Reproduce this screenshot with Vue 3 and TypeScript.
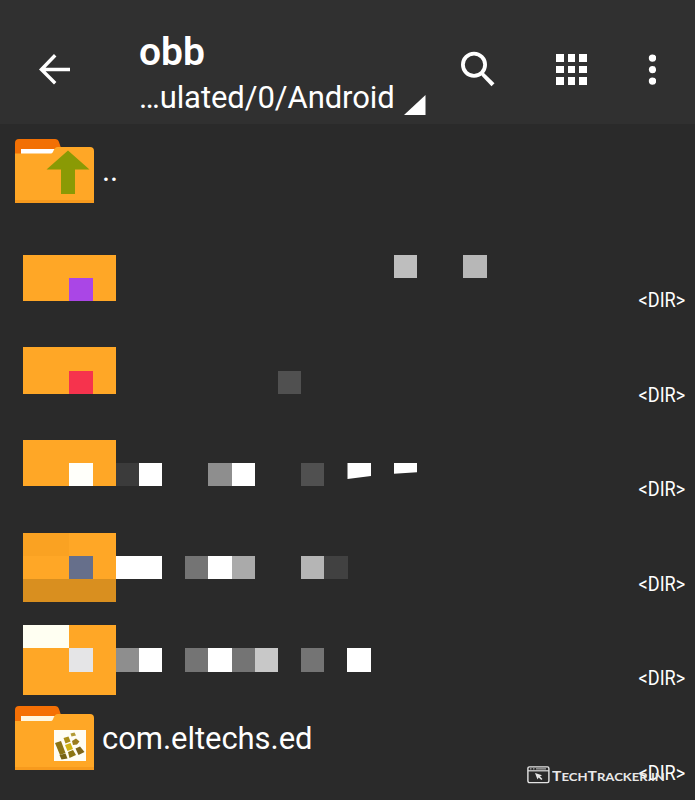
<script setup lang="ts">
interface Tile {
  x: number
  y: number
  w: number
  h: number
  fill: string
}
interface Entry {
  top: number
  height: number
  tiles: Tile[]
  slants?: string[]
}

const t = (x: number, y: number, w: number, h: number, fill: string): Tile => ({ x, y, w, h, fill })

const hiddenEntries: Entry[] = [
  {
    top: 218,
    height: 95,
    tiles: [
      t(23, 255, 93, 46, '#ffa726'),
      t(69, 278, 24, 23, '#aa46e6'),
      t(394, 255, 23, 23, '#bebebe'),
      t(463, 255, 24, 23, '#b7b7b7'),
    ],
  },
  {
    top: 313,
    height: 94,
    tiles: [
      t(23, 347, 93, 47, '#ffa726'),
      t(69, 371, 24, 23, '#f6334d'),
      t(278, 371, 23, 23, '#505050'),
    ],
  },
  {
    top: 407,
    height: 95,
    tiles: [
      t(23, 440, 93, 46, '#ffa726'),
      t(69, 463, 24, 23, '#fffffa'),
      t(116, 463, 23, 23, '#3b3b3b'),
      t(139, 463, 23, 23, '#ffffff'),
      t(208, 463, 24, 23, '#8e8e8e'),
      t(232, 463, 23, 23, '#ffffff'),
      t(301, 463, 23, 23, '#505050'),
    ],
    slants: ['347.5,463 371,463 371,476 347.5,479', '394,463 417,463 417,472.3 394,473.7'],
  },
  {
    top: 502,
    height: 94,
    tiles: [
      t(23, 533, 46, 23, '#faa222'),
      t(69, 533, 47, 23, '#ffa726'),
      t(23, 556, 93, 23, '#ffa726'),
      t(23, 579, 93, 23, '#d98f1f'),
      t(69, 556, 24, 23, '#666f8b'),
      t(116, 556, 46, 23, '#ffffff'),
      t(185, 556, 23, 23, '#747474'),
      t(208, 556, 24, 23, '#ffffff'),
      t(232, 556, 23, 23, '#aaaaaa'),
      t(301, 556, 23, 23, '#b5b5b5'),
      t(324, 556, 24, 23, '#414141'),
    ],
  },
  {
    top: 596,
    height: 95,
    tiles: [
      t(23, 625, 93, 70, '#ffa726'),
      t(23, 625, 46, 23, '#fffff2'),
      t(69, 648, 24, 24, '#e5e5e7'),
      t(116, 648, 23, 24, '#8e8e8e'),
      t(139, 648, 23, 24, '#ffffff'),
      t(185, 648, 23, 24, '#747474'),
      t(208, 648, 24, 24, '#ffffff'),
      t(232, 648, 23, 24, '#747474'),
      t(255, 648, 23, 24, '#c8c8c8'),
      t(301, 648, 23, 24, '#747474'),
      t(347, 648, 24, 24, '#ffffff'),
    ],
  },
]
</script>

<template>
  <main class="screen">
    <header class="bar">
      <svg class="back" width="32" height="32" viewBox="0 0 32 32">
        <path d="M31 16.500H3M16.200 2.200 2.400 16.500l13.800 13.700" fill="none" stroke="#fff" stroke-width="3.400" />
      </svg>
      <div class="titles">
        <div class="title">obb</div>
        <div class="path-line">
          <span class="path">…ulated/0/Android</span>
          <svg class="corner" width="22" height="20" viewBox="0 0 22 20"><path d="M21.5 0v20H0z" fill="#fff" /></svg>
        </div>
      </div>
      <svg class="search" width="36" height="36" viewBox="0 0 36 36">
        <circle cx="14" cy="13.7" r="11.1" fill="none" stroke="#fff" stroke-width="3.8" />
        <path d="M21 21.5 24 22l10.5 10.2-3 3L21.8 25z" fill="#fff" />
      </svg>
      <svg class="grid" width="32" height="32" viewBox="0 0 32 32" shape-rendering="crispEdges">
        <path d="M0 0h8v8H0zM12 0h7v8h-7zM23 0h8v8h-8zM0 12h8v7H0zM12 12h7v7h-7zM23 12h8v7h-8zM0 23h8v8H0zM12 23h7v8h-7zM23 23h8v8h-8z" fill="#fff" />
      </svg>
      <svg class="more" width="8" height="32" viewBox="0 0 8 32">
        <circle cx="4.5" cy="4.1" r="3.7" fill="#fff" />
        <circle cx="4.5" cy="15.6" r="3.6" fill="#fff" />
        <circle cx="4.5" cy="27.1" r="3.7" fill="#fff" />
      </svg>
    </header>

    <section class="list">
      <div class="row first">
        <svg class="folder" width="79" height="64" viewBox="0 0 79 64">
          <path d="M0 20V4q0-4 4-4h36q3 0 4 3l3 9v8z" fill="#f27004" />
          <path d="M6 10h36v8H6z" fill="#fff" />
          <path d="M0 14.5h36c3 0 2-6.5 7-6.5h32q4 0 4 4v52H0z" fill="#ffa726" />
          <path d="M0 61h79v3H0z" fill="#f79a1d" />
          <path d="M53 11.5 31.5 30.5H46V55h14V30.5h14.5z" fill="#8a9a05" />
        </svg>
        <span class="name up">..</span>
      </div>

      <div v-for="e in hiddenEntries" :key="e.top" class="row">
        <svg class="mosaic" width="500" :height="e.height" :viewBox="`0 ${e.top} 500 ${e.height}`">
          <rect v-for="(r, i) in e.tiles" :key="i" :x="r.x" :y="r.y" :width="r.w" :height="r.h" :fill="r.fill" shape-rendering="crispEdges" />
          <polygon v-for="p in e.slants" :key="p" :points="p" fill="#fff" />
        </svg>
        <span class="dir">&lt;DIR&gt;</span>
      </div>

      <div class="row last">
        <svg class="folder" width="79" height="64" viewBox="0 0 79 64">
          <path d="M0 20V4q0-4 4-4h36q3 0 4 3l3 9v8z" fill="#f57005" />
          <path d="M6 10h36v8H6z" fill="#fff6e0" />
          <path d="M0 15h36c3 0 2-7 7-7h32q4 0 4 4v52H0z" fill="#ffa726" />
          <path d="M0 61h79v3H0z" fill="#f79a1d" />
          <path d="M39 24h32v31H39z" fill="#fffdf4" />
          <path d="m40 37 6-2 4.500 12-5.500 2z" fill="#8b7416" />
          <path d="m44.500 49 6-1.500 2 5-6 1z" fill="#766315" />
          <path d="m48.500 32 5-1.500 2 5-5 2z" fill="#aa8d18" />
          <path d="m50 39 5.500-2 2.500 6-5.500 2z" fill="#d1b313" />
          <path d="m53 46 5-2 3 5-6.500 3z" fill="#8c7512" />
          <path d="m55.500 27.500 4-1 1.500 3-4.500 1z" fill="#b29a35" />
          <path d="m57 35 4-2.500 3.500 3-2.500 3-4 .5z" fill="#9b7c1d" />
          <path d="m60.500 42.500 4.500-2 4.500 5.500-6 3z" fill="#7d6519" />
        </svg>
        <span class="name">com.eltechs.ed</span>
        <span class="dir">&lt;DIR&gt;</span>
        <div class="watermark">
          <svg width="23" height="18" viewBox="0 0 23 18">
            <rect x=".9" y=".9" width="21" height="15.700" rx="1.500" fill="none" stroke="#e4e4e4" stroke-width="1.400" />
            <path d="M1 4.800h21" stroke="#ddd" stroke-width="1.200" />
            <path d="M3 2.900h1.500M6 2.900h1.500M9 2.900h10" stroke="#ccc" stroke-width="1" />
            <path d="m8 7 7 2.200-2 1.200 2.500 2.500-1.200 1-2.600-2.500-1.200 2z" fill="#e4e4e4" />
          </svg>
          <span class="brand">T<small>ECH</small>T<small>RACKER.IN</small></span>
        </div>
      </div>
    </section>
  </main>
</template>

<style>
body {
  margin: 0;
  background: #2a2a2a;
}
</style>

<style scoped>
.screen {
  width: 695px;
  height: 800px;
  overflow: hidden;
  background: #2a2a2a;
  color: #fff;
  font-family: Roboto, sans-serif;
}
.bar {
  box-sizing: border-box;
  height: 124px;
  background: #303030;
  display: flex;
  align-items: flex-start;
  padding-left: 39px;
}
.bar svg {
  display: block;
  flex: none;
}
.back {
  margin-top: 53px;
}
.titles {
  width: 320px;
  margin-left: 68px;
  padding-top: 28px;
  white-space: nowrap;
}
.title {
  font-size: 39px;
  line-height: 48px;
  font-weight: 600;
}
.path-line {
  display: flex;
}
.path {
  width: 265px;
  font-size: 31px;
  line-height: 44px;
  letter-spacing: -0.08px;
}
.bar .corner {
  margin-top: 19px;
}
.search {
  margin-top: 51px;
  margin-left: 1px;
}
.grid {
  margin-top: 54px;
  margin-left: 60px;
}
.more {
  margin-top: 54px;
  margin-left: 60px;
}
.list {
  display: grid;
  grid-template-rows: 94px 95px 94px 95px 94px 95px 109px;
}
.row {
  display: flex;
  align-items: flex-start;
  justify-content: space-between;
  position: relative;
  padding-right: 10px;
  white-space: nowrap;
}
.first,
.last {
  padding-left: 15px;
  justify-content: flex-start;
}
.folder {
  display: block;
  flex: none;
  margin-top: 15px;
}
.mosaic {
  display: block;
  overflow: visible;
}
.name {
  margin-left: 8px;
  margin-top: 28px;
  font-size: 31px;
  line-height: 40px;
  letter-spacing: -0.05px;
}
.up {
  margin-top: 27px;
}
.dir {
  margin-top: 71px;
  margin-left: auto;
  font-size: 19.5px;
  line-height: 24px;
  transform: scaleX(0.93);
  transform-origin: right center;
}
.watermark {
  position: absolute;
  left: 527px;
  top: 75px;
  display: flex;
  color: #e8e8e8;
}
.brand {
  margin-left: 2px;
  font-family: Lato, sans-serif;
  font-weight: 700;
  font-size: 13.5px;
  line-height: 20px;
  transform: scaleX(1.16);
  transform-origin: left center;
}
.brand small {
  font-size: 11.3px;
}
</style>
